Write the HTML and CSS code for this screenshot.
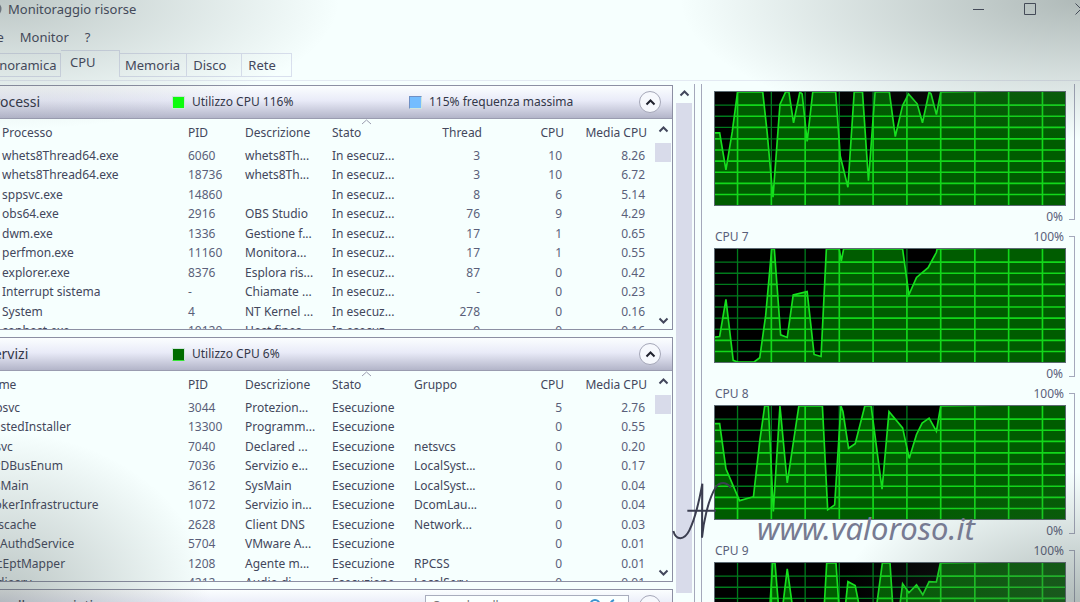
FILE: index.html
```html
<!DOCTYPE html>
<html lang="it">
<head>
<meta charset="utf-8">
<title>Monitoraggio risorse</title>
<link rel="stylesheet" href="styles.css">
</head>
<body>
<svg class="defs" aria-hidden="true">
  <defs>
    <path id="grid" d="M68 0V345M170 0V345M272 0V345M375 0V345M477 0V345M579 0V345M681 0V345M784 0V345M886 0V345M988 0V345M0 40H1056M0 74H1056M0 108H1056M0 143H1056M0 177H1056M0 211H1056M0 245H1056M0 279H1056M0 313H1056"/>
    <path id="up" d="M1.500 6.500L5.500 2.500L9.500 6.500"/>
    <path id="down" d="M1.500 2.500L5.500 6.500L9.500 2.500"/>
  </defs>
</svg>
<div class="window">
  <header class="titlebar">
    <svg class="app-icon" width="16" height="16" viewBox="0 0 16 16"><circle cx="8" cy="8" r="6.500"/></svg>
    <h1>Monitoraggio risorse</h1>
    <div class="controls">
      <button aria-label="Riduci a icona"><svg width="12" height="12"><path d="M0 6.500H11"/></svg></button>
      <button aria-label="Ingrandisci"><svg width="12" height="12"><path d="M.5 .5H11.500V11.500H.5Z"/></svg></button>
      <button aria-label="Chiudi"><svg width="12" height="12"><path d="M.5 .5L11.500 11.500M11.500 .5L.5 11.500"/></svg></button>
    </div>
  </header>
  <nav class="menu"><button>File</button><button>Monitor</button><button>?</button></nav>
  <div class="tabs" role="tablist">
    <button role="tab">Panoramica</button>
    <button role="tab" class="selected" aria-selected="true">CPU</button>
    <button role="tab" class="t-mem">Memoria</button>
    <button role="tab">Disco</button>
    <button role="tab">Rete</button>
  </div>
  <main class="content">
    <div class="panels">
      <section class="panel">
        <div class="panel-head">
          <h2>Processi</h2>
          <span class="meter m1"><i class="chip bright"></i>Utilizzo CPU 116%</span>
          <span class="meter m2"><i class="chip blue"></i>115% frequenza massima</span>
          <button class="round" aria-label="Comprimi"><svg width="11" height="9"><use href="#up"/></svg></button>
        </div>
        <div class="panel-body">
          <table class="processes">
            <colgroup><col><col class="c-pid"><col class="c-desc"><col class="c-state"><col class="c-mid"><col class="c-cpu"><col class="c-avg"></colgroup>
            <thead><tr><th>Processo</th><th>PID</th><th>Descrizione</th><th class="sorted">Stato<svg width="11" height="6"><path d="M1 5L5.500 1L10 5"/></svg></th><th class="num mid">Thread</th><th class="num">CPU</th><th class="num avg">Media CPU</th></tr></thead>
            <tbody>
              <tr><td>whets8Thread64.exe</td><td class="n">6060</td><td>whets8Th...</td><td>In esecuz...</td><td class="num mid">3</td><td class="num">10</td><td class="num avg">8.26</td></tr>
              <tr><td>whets8Thread64.exe</td><td class="n">18736</td><td>whets8Th...</td><td>In esecuz...</td><td class="num mid">3</td><td class="num">10</td><td class="num avg">6.72</td></tr>
              <tr><td>sppsvc.exe</td><td class="n">14860</td><td></td><td>In esecuz...</td><td class="num mid">8</td><td class="num">6</td><td class="num avg">5.14</td></tr>
              <tr><td>obs64.exe</td><td class="n">2916</td><td>OBS Studio</td><td>In esecuz...</td><td class="num mid">76</td><td class="num">9</td><td class="num avg">4.29</td></tr>
              <tr><td>dwm.exe</td><td class="n">1336</td><td>Gestione f...</td><td>In esecuz...</td><td class="num mid">17</td><td class="num">1</td><td class="num avg">0.65</td></tr>
              <tr><td>perfmon.exe</td><td class="n">11160</td><td>Monitora...</td><td>In esecuz...</td><td class="num mid">17</td><td class="num">1</td><td class="num avg">0.55</td></tr>
              <tr><td>explorer.exe</td><td class="n">8376</td><td>Esplora ris...</td><td>In esecuz...</td><td class="num mid">87</td><td class="num">0</td><td class="num avg">0.42</td></tr>
              <tr><td>Interrupt sistema</td><td class="n">-</td><td>Chiamate ...</td><td>In esecuz...</td><td class="num mid">-</td><td class="num">0</td><td class="num avg">0.23</td></tr>
              <tr><td>System</td><td class="n">4</td><td>NT Kernel ...</td><td>In esecuz...</td><td class="num mid">278</td><td class="num">0</td><td class="num avg">0.16</td></tr>
              <tr><td>conhost.exe</td><td class="n">10120</td><td>Host fines...</td><td>In esecuz...</td><td class="num mid">9</td><td class="num">0</td><td class="num avg">0.16</td></tr>
            </tbody>
          </table>
          <div class="scroll"><svg width="11" height="9"><use href="#up"/></svg><i class="thumb"></i><svg class="last" width="11" height="9"><use href="#down"/></svg></div>
        </div>
      </section>
      <section class="panel">
        <div class="panel-head">
          <h2>Servizi</h2>
          <span class="meter m1"><i class="chip dark"></i>Utilizzo CPU 6%</span>
          <button class="round" aria-label="Comprimi"><svg width="11" height="9"><use href="#up"/></svg></button>
        </div>
        <div class="panel-body">
          <table>
            <colgroup><col><col class="c-pid"><col class="c-desc"><col class="c-state"><col class="c-mid"><col class="c-cpu"><col class="c-avg"></colgroup>
            <thead><tr><th>Nome</th><th>PID</th><th>Descrizione</th><th class="sorted">Stato<svg width="11" height="6"><path d="M1 5L5.500 1L10 5"/></svg></th><th>Gruppo</th><th class="num">CPU</th><th class="num avg">Media CPU</th></tr></thead>
            <tbody>
              <tr><td>sppsvc</td><td class="n">3044</td><td>Protezion...</td><td>Esecuzione</td><td></td><td class="num">5</td><td class="num avg">2.76</td></tr>
              <tr><td>TrustedInstaller</td><td class="n">13300</td><td>Programm...</td><td>Esecuzione</td><td></td><td class="num">0</td><td class="num avg">0.55</td></tr>
              <tr><td>dcsvc</td><td class="n">7040</td><td>Declared ...</td><td>Esecuzione</td><td>netsvcs</td><td class="num">0</td><td class="num avg">0.20</td></tr>
              <tr><td>WPDBusEnum</td><td class="n">7036</td><td>Servizio e...</td><td>Esecuzione</td><td>LocalSyst...</td><td class="num">0</td><td class="num avg">0.17</td></tr>
              <tr><td>SysMain</td><td class="n">3612</td><td>SysMain</td><td>Esecuzione</td><td>LocalSyst...</td><td class="num">0</td><td class="num avg">0.04</td></tr>
              <tr><td>BrokerInfrastructure</td><td class="n">1072</td><td>Servizio in...</td><td>Esecuzione</td><td>DcomLau...</td><td class="num">0</td><td class="num avg">0.04</td></tr>
              <tr><td>Dnscache</td><td class="n">2628</td><td>Client DNS</td><td>Esecuzione</td><td>Network...</td><td class="num">0</td><td class="num avg">0.03</td></tr>
              <tr><td>VMAuthdService</td><td class="n">5704</td><td>VMware A...</td><td>Esecuzione</td><td></td><td class="num">0</td><td class="num avg">0.01</td></tr>
              <tr><td>RpcEptMapper</td><td class="n">1208</td><td>Agente m...</td><td>Esecuzione</td><td>RPCSS</td><td class="num">0</td><td class="num avg">0.01</td></tr>
              <tr><td>Audiosrv</td><td class="n">4212</td><td>Audio di ...</td><td>Esecuzione</td><td>LocalServ...</td><td class="num">0</td><td class="num avg">0.01</td></tr>
            </tbody>
          </table>
          <div class="scroll"><svg width="11" height="9"><use href="#up"/></svg><i class="thumb"></i><svg class="last" width="11" height="9"><use href="#down"/></svg></div>
        </div>
      </section>
      <section class="panel">
        <div class="panel-head">
          <h2>Handle associati</h2>
          <div class="search">
            <input type="text" aria-label="Cerca handle" placeholder="Cerca handle">
            <svg width="12" height="14" viewBox="0 0 12 14"><circle cx="6" cy="5.500" r="4.500"/><path d="M3 9L1 13"/></svg>
            <svg width="12" height="14" viewBox="0 0 12 14"><path d="M7 1C2 3 2 9 6 12"/></svg>
          </div>
          <button class="round" aria-label="Comprimi"><svg width="11" height="9"><use href="#up"/></svg></button>
        </div>
      </section>
    </div>
    <div class="page-scroll"><svg width="11" height="9"><use href="#up"/></svg><i></i></div>
    <aside class="graphs">
      <figure>
        <figcaption><span>CPU 6</span><span>100%</span></figcaption>
        <svg class="graph" viewBox="0 0 1056 345" preserveAspectRatio="none">
          <clipPath id="k6"><polygon id="p6" points="-6,355 -6,125 14,125 33,238 52,122 68,0 144,0 157,120 175,321 187,160 196,38 213,0 223,0 237,94 256,0 263,6 278,151 295,0 364,0 378,196 401,291 420,0 445,0 463,271 483,0 526,0 544,136 566,41 584,6 610,36 626,94 646,0 652,6 668,69 681,0 1070,-6 1070,355"/></clipPath>
          <use href="#grid" class="dim"/><use href="#p6" class="area"/><use href="#grid" class="lit" clip-path="url(#k6)"/>
        </svg>
        <div class="zero">0%</div>
      </figure>
      <figure>
        <figcaption><span>CPU 7</span><span>100%</span></figcaption>
        <svg class="graph" viewBox="0 0 1056 345" preserveAspectRatio="none">
          <clipPath id="k7"><polygon id="p7" points="-6,355 -6,270 14,267 33,154 55,340 68,345 118,345 135,332 153,202 171,0 179,0 198,262 218,270 236,140 278,130 299,322 320,328 336,0 375,0 381,37 388,0 566,0 585,140 608,87 643,57 668,10 670,0 1070,-6 1070,355"/></clipPath>
          <use href="#grid" class="dim"/><use href="#p7" class="area"/><use href="#grid" class="lit" clip-path="url(#k7)"/>
        </svg>
        <div class="zero">0%</div>
      </figure>
      <figure>
        <figcaption><span>CPU 8</span><span>100%</span></figcaption>
        <svg class="graph" viewBox="0 0 1056 345" preserveAspectRatio="none">
          <clipPath id="k8"><polygon id="p8" points="-6,355 -6,54 14,54 33,192 74,289 116,277 135,107 150,0 161,0 176,322 196,0 218,235 253,0 324,0 340,317 361,302 380,0 386,17 403,129 423,115 452,0 471,0 504,254 525,17 566,67 586,160 608,87 625,52 646,37 668,77 681,0 1070,-6 1070,355"/></clipPath>
          <use href="#grid" class="dim"/><use href="#p8" class="area"/><use href="#grid" class="lit" clip-path="url(#k8)"/>
        </svg>
        <div class="zero">0%</div>
      </figure>
      <figure>
        <figcaption><span>CPU 9</span><span>100%</span></figcaption>
        <svg class="graph" viewBox="0 0 1056 345" preserveAspectRatio="none">
          <clipPath id="k9"><polygon id="p9" points="-6,355 140,345 166,125 174,0 181,0 192,135 204,135 218,18 234,135 260,300 320,300 330,125 337,0 365,0 374,135 384,200 394,125 401,57 423,69 436,135 460,250 487,135 505,0 528,0 536,125 548,200 557,135 566,63 585,91 608,67 627,97 646,57 668,58 680,0 1070,-6 1070,355"/></clipPath>
          <use href="#grid" class="dim"/><use href="#p9" class="area"/><use href="#grid" class="lit" clip-path="url(#k9)"/>
        </svg>
        <div class="zero">0%</div>
      </figure>
    </aside>
  </main>
</div>
<div class="vignette"></div>
<div class="watermark">
  <svg width="60" height="66" viewBox="0 0 180 198"><path d="M4 162C12 190 36 192 52 160C70 124 82 70 91 20L90 182C94 140 108 66 132 30C146 12 164 16 176 32M46 101H132"/></svg>
  <span>www.valoroso.it</span>
</div>
</body>
</html>
```
FILE: styles.css
```css
* { box-sizing: border-box; }

body {
  margin: 0;
  height: 100vh;
  overflow: hidden;
  position: relative;
  background: #f6fffe;
  color: #43475c;
  font: 12px/16px "Noto Sans", "Open Sans", sans-serif;
}

.defs { position: absolute; width: 0; height: 0; }

button { border: 0; padding: 0; background: none; color: inherit; font: inherit; }
svg { fill: none; stroke: currentColor; }

.window {
  height: 100%;
  margin: 0 -8px 0 -18px;
  display: flex;
  flex-direction: column;
  overflow: hidden;
}

.titlebar { display: flex; align-items: center; height: 17px; padding: 0 1px 0 4px; flex: none; }
.app-icon { margin: 0 6px 0 0; stroke-width: 2; stroke: #7d8492; }
h1 { flex: 1; margin: 0; font-size: 13px; font-weight: 400; }
.controls { display: flex; gap: 39px; }
.controls svg { display: block; }

.menu { display: flex; gap: 16px; height: 39px; padding: 0 1px; align-items: center; flex: none; font-size: 13px; }

.tabs {
  display: flex;
  align-items: flex-end;
  flex: none;
  height: 21px;
  font-size: 13px;
}
.tabs button { height: 24px; padding: 0 15px 0 6px; border: 1px solid #d9e0ee; border-left: 0; text-align: left; }
.tabs button:first-child { padding: 0 2px; width: 79px; }
.tabs .selected { height: 27px; width: 59px; padding: 0 9px 4px; border-bottom: 0; }
.tabs .t-mem { padding: 0 6px 0 5px; }

.content {
  flex: 1;
  min-height: 0;
  margin-top: 3px;
  padding-top: 3px;
  border-top: 1px solid #e3e9f2;
  display: grid;
  grid-template-columns: minmax(0, 1fr) 22px 393px;
}

.panels { display: flex; flex-direction: column; gap: 7px; min-height: 0; padding-top: 1px; overflow: hidden; }
.panel { flex: none; border: 1px solid #8c8fa3; border-left: 0; }
.panel-head {
  position: relative;
  display: flex;
  align-items: center;
  height: 33px;
  padding: 0 11px 0 4px;
  border-bottom: 1px solid #9a9cb0;
  background: linear-gradient(#fbfeff, #e9ebf8 45%, #b3b5c9);
  color: #333748;
}
h2 { margin: 0; width: 186px; font-size: 14px; font-weight: 400; white-space: nowrap; }
.meter { display: flex; align-items: center; gap: 7px; }
.m1 { width: 237px; }
.chip { width: 13px; height: 13px; border: 1px solid #cfe4dc; }
.bright { background: #0cff0c; }
.blue { background: #74bdff; border-top-color: #6f8fc4; border-left-color: #6f8fc4; }
.dark { background: #006c00; border-bottom-color: #37e437; }
.round {
  width: 22px;
  height: 22px;
  margin-left: auto;
  border: 1px solid #a5a7b8;
  border-radius: 50%;
  background: #f6f8fd;
  color: #20222e;
  display: grid;
  place-items: center;
}
.round svg { stroke-width: 2; }

.panel-body { display: flex; height: 210px; overflow: hidden; }
table { flex: 1; min-width: 0; height: 222px; table-layout: fixed; border-collapse: collapse; }
.c-pid { width: 57px; }
.c-desc { width: 87px; }
.c-state { width: 82px; }
.c-mid { width: 86px; }
.c-cpu { width: 64px; }
.c-avg { width: 91px; }
th, td { padding: 0; text-align: left; font-weight: 400; white-space: nowrap; }
th { height: 27px; }
td { padding-right: 2px; }
.processes th:first-child, .processes td:first-child { padding-left: 20px; }
.num { text-align: right; }
td.num, td.n { color: #5a5f7a; }
th.mid { padding-right: 18px; }
td.mid { padding-right: 20px; }
th.avg { padding-right: 8px; }
td.avg { padding-right: 10px; }
.sorted { position: relative; }
.sorted svg { position: absolute; left: 29px; top: 0; stroke: #9a9caf; }

.scroll { width: 17px; flex: none; display: flex; flex-direction: column; align-items: center; padding: 6px 1px 4px 0; }
.scroll svg, .page-scroll svg { stroke-width: 2; flex: none; }
.thumb { width: 16px; height: 19px; margin-top: 9px; background: #d8dbea; }
.last { margin-top: auto; }

.page-scroll {
  display: flex;
  flex-direction: column;
  align-items: center;
  gap: 5px;
  padding: 5px 2px 9px 3px;
  border-right: 1px solid #a4a8bb;
}
.page-scroll i { flex: 1; width: 16px; background: #d8dbea; }

.graphs { margin-left: 6px; padding: 0 13px 0 12px; border-left: 1px solid #a4a8bb; overflow: hidden; color: #5a5f7a; }
figure { margin: 0; position: relative; padding-right: 9px; }
figure:first-child { margin-top: -15px; }
figure::after {
  content: "";
  position: absolute;
  top: 10px;
  bottom: 6px;
  right: 0;
  width: 5px;
  border: 1px solid #a4a8bb;
  border-left: 0;
}
figcaption { display: flex; justify-content: space-between; height: 22px; padding: 3px 2px 0 1px; }
.graph { display: block; width: 100%; height: 115px; border: 1px solid #5c6a72; background: #000; }
.dim { stroke: #007a1c; stroke-width: 4; }
.area { fill: #005c00; stroke: #16e01e; stroke-width: 5; }
.lit { stroke: #12d81a; stroke-width: 5; }
.zero { height: 20px; padding: 3px 3px 0 0; text-align: right; }

.search { display: flex; align-items: center; gap: 6px; width: 204px; height: 22px; margin-left: 253px; padding-right: 9px; border: 1px solid #a9adbd; background: #fbffff; color: #3b93cf; }
.search input { flex: 1; min-width: 0; border: 0; background: none; font: inherit; padding: 0 6px; }
.search svg { stroke-width: 2; }

.vignette {
  position: absolute;
  inset: 0;
  pointer-events: none;
  background:
    radial-gradient(ellipse 340px 130px at 0 0, rgba(70, 82, 80, .32), transparent),
    radial-gradient(ellipse 400px 140px at 100% 0, rgba(70, 82, 80, .4), transparent),
    radial-gradient(ellipse 210px 170px at 0 100%, rgba(70, 82, 80, .34), transparent),
    radial-gradient(ellipse 240px 130px at 100% 100%, rgba(70, 82, 80, .4), transparent);
}

.watermark {
  position: absolute;
  left: 672px;
  top: 477px;
  display: flex;
  align-items: center;
  gap: 25px;
  color: #777b92;
  font-size: 31px;
  font-style: italic;
}
.watermark span { margin-top: 36px; }
.watermark svg { stroke: #3b3e50; stroke-width: 6; }
```
